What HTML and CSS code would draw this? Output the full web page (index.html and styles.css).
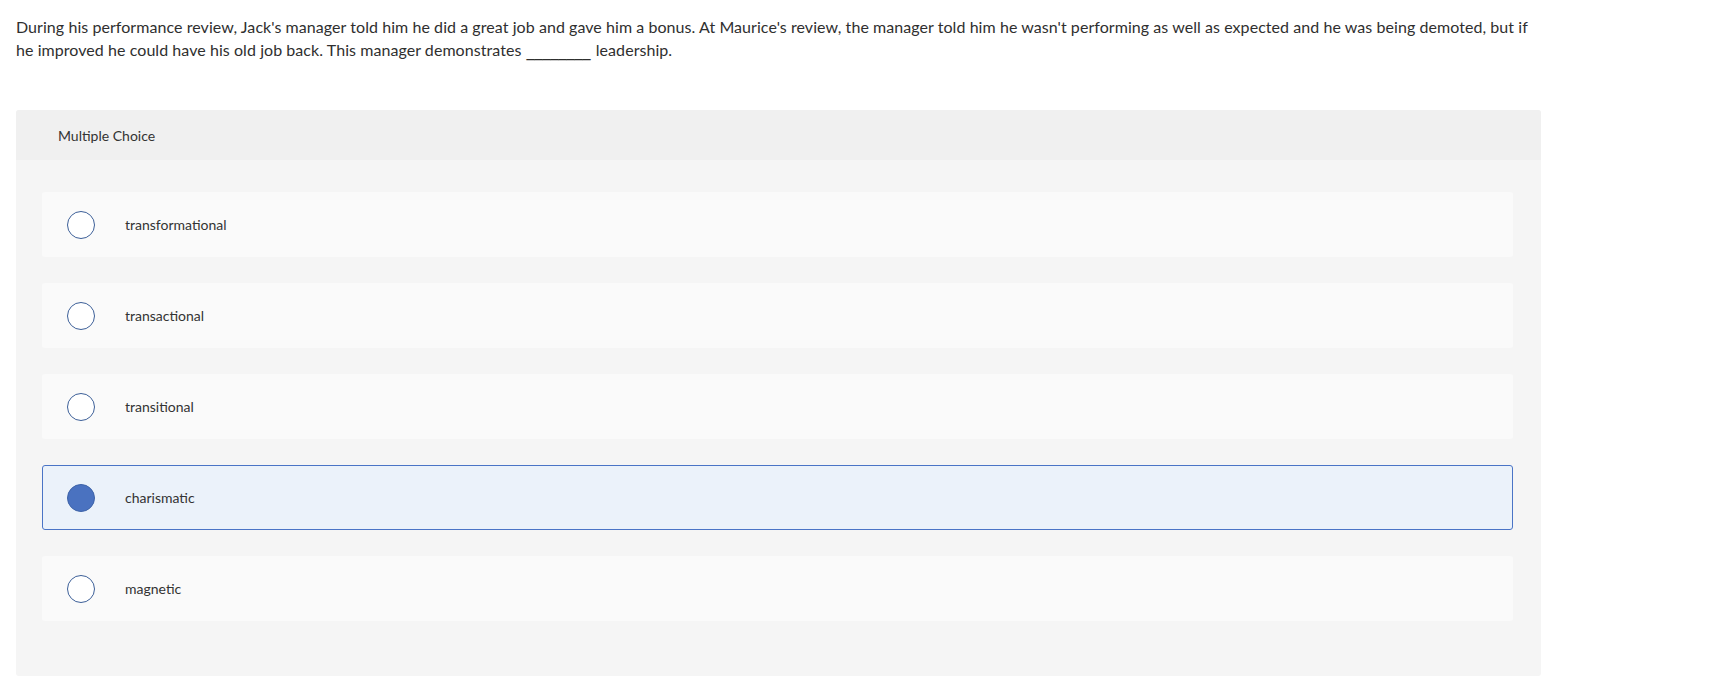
FILE: index.html
```html
<!DOCTYPE html>
<html>
<head>
<meta charset="utf-8">
<link rel="stylesheet" href="styles.css">
</head>
<body>
<div class="page">
  <p class="question">During his performance review, Jack's manager told him he did a great job and gave him a bonus. At Maurice's review, the manager told him he wasn't performing as well as expected and he was being demoted, but if he improved he could have his old job back. This manager demonstrates <span class="blank">________</span> leadership.</p>
  <div class="panel">
    <div class="panel-head">Multiple Choice</div>
    <div class="options">
      <div class="option"><span class="radio"></span><span class="label">transformational</span></div>
      <div class="option"><span class="radio"></span><span class="label">transactional</span></div>
      <div class="option"><span class="radio"></span><span class="label">transitional</span></div>
      <div class="option selected"><span class="radio"></span><span class="label">charismatic</span></div>
      <div class="option"><span class="radio"></span><span class="label">magnetic</span></div>
    </div>
  </div>
</div>
</body>
</html>
```
FILE: styles.css
```css
html, body {
  margin: 0;
  padding: 0;
  background: #ffffff;
}
body {
  font-family: "Lato", "Liberation Sans", sans-serif;
  color: #333333;
}
.page {
  padding: 15px 0 0 16px;
  width: 1525px;
}
.question {
  margin: 0;
  font-size: 16px;
  line-height: 23px;
  letter-spacing: 0.06px;
  width: 1525px;
  color: #2f2f2f;
}
.blank {
  font-family: "DejaVu Sans", sans-serif;
  letter-spacing: 0;
  margin: 0 1px;
}
.panel {
  margin-top: 48px;
  background: #f5f5f5;
  border-radius: 3px;
  height: 566px;
  box-sizing: border-box;
}
.panel-head {
  background: #f0f0f0;
  height: 50px;
  display: flex;
  align-items: center;
  padding-left: 42px;
  font-size: 14px;
  color: #333;
  border-radius: 3px 3px 0 0;
}
.options {
  padding: 32px 28px 0 26px;
  display: flex;
  flex-direction: column;
  gap: 26px;
}
.option {
  height: 65px;
  background: #fafafa;
  border: 1px solid transparent;
  border-radius: 3px;
  box-sizing: border-box;
  display: flex;
  align-items: center;
  padding-left: 24px;
}
.option.selected {
  background: #ebf2fa;
  border-color: #4a74c6;
}
.radio {
  width: 28px;
  height: 28px;
  border-radius: 50%;
  border: 1.5px solid #3c5f98;
  background: #ffffff;
  box-sizing: border-box;
  flex: none;
}
.selected .radio {
  background: #4a72c0;
  border-color: #3d63a8;
}
.label {
  margin-left: 30px;
  font-size: 14px;
  color: #333;
}
```
